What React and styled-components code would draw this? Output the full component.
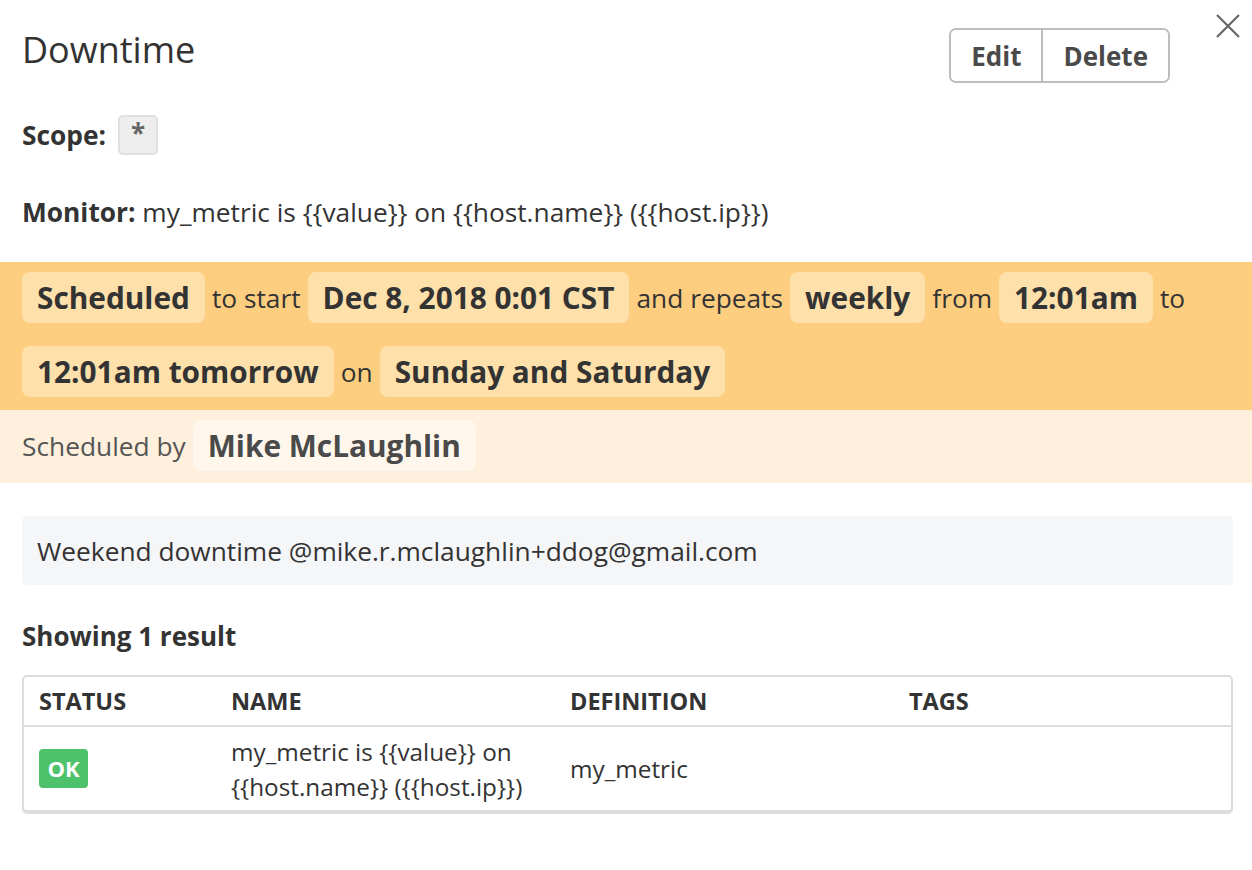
import React from 'react'
import styled, { createGlobalStyle } from 'styled-components'

const GlobalStyle = createGlobalStyle`
  body {
    margin: 0;
    background: #fff;
    font-family: "Open Sans", "Noto Sans", sans-serif;
    color: #333;
  }
`;

const Panel = styled.div`
  position: relative;
  width: 1252px;
  min-height: 870px;
  padding-top: 28px;
`;

const Header = styled.div`
  display: flex;
  align-items: center;
  justify-content: space-between;
  padding: 0 82px 0 22px;
  height: 55px;
`;

const Title = styled.h1`
  margin: 0;
  font-size: 36px;
  font-weight: 400;
  color: #333;
  line-height: 1;
  transform: translateY(-6px);
`;

const ButtonGroup = styled.div`
  display: flex;
  height: 55px;
  border: 2px solid #bdbdbd;
  border-radius: 7px;
  overflow: hidden;
  box-sizing: border-box;
`;

const GroupButton = styled.button`
  font-family: inherit;
  font-size: 26px;
  font-weight: 700;
  color: #4a4a4a;
  background: #fff;
  border: none;
  padding: 0 ${p => p.$pad}px;
  border-left: ${p => (p.$first ? 'none' : '2px solid #bdbdbd')};
  cursor: pointer;
`;

const Close = styled.button`
  position: absolute;
  top: 12px;
  right: 10px;
  width: 28px;
  height: 28px;
  padding: 0;
  border: none;
  background: none;
`;

const Field = styled.div`
  display: flex;
  align-items: center;
  gap: 12px;
  padding: 0 22px;
  font-size: 26.3px;
  margin-top: ${p => p.$top}px;
  height: 40px;
`;

const Label = styled.span`
  font-weight: 700;
  color: #333;
`;

const ScopeChip = styled.span`
  display: inline-flex;
  align-items: flex-start;
  justify-content: center;
  width: 40px;
  height: 40px;
  box-sizing: border-box;
  background: #eeeeee;
  border: 2px solid #e0e0e0;
  border-radius: 5px;
  color: #666;
  font-weight: 700;
  font-size: 26px;
  line-height: 1.3;
`;

const ScheduleBand = styled.div`
  margin-top: 30px;
  background: #fdce80;
  padding: 10px 22px 13px;
  display: flex;
  flex-wrap: wrap;
  align-items: center;
  column-gap: 7px;
  row-gap: 23px;
  font-size: 26.3px;
  color: #333;
`;

const Chip = styled.span`
  display: inline-flex;
  align-items: center;
  height: 51px;
  padding: 0 15px;
  border-radius: 8px;
  background: ${p => p.$bg || '#fde0aa'};
  font-size: 29.8px;
  font-weight: 700;
  color: ${p => p.$color || '#333'};
`;

const Word = styled.span`
  color: ${p => p.$color || '#333'};
`;

const AuthorBand = styled.div`
  background: #fef0dc;
  padding: 10px 22px 12px;
  display: flex;
  align-items: center;
  gap: 7px;
  font-size: 26.3px;
`;

const Body = styled.div`
  padding: 0 19px 0 22px;
`;

const Message = styled.div`
  margin-top: 33px;
  background: #f5f6f8;
  border-radius: 5px;
  height: 69px;
  display: flex;
  align-items: center;
  padding: 0 15px;
  font-size: 26.3px;
  color: #333;
`;

const Results = styled.div`
  margin-top: 33px;
  font-size: 26px;
  font-weight: 700;
  color: #333;
`;

const Table = styled.div`
  margin-top: 21px;
  border: 2px solid #dddde0;
  border-bottom-width: 4px;
  border-radius: 5px;
`;

const Row = styled.div`
  display: grid;
  grid-template-columns: 192px 339px 339px 1fr;
  align-items: center;
  height: ${p => p.$h}px;
  border-top: ${p => (p.$head ? 'none' : '2px solid #dddde0')};
  box-sizing: border-box;
`;

const HeadCell = styled.div`
  padding-left: 15px;
  font-size: 23.5px;
  font-weight: 700;
  color: #333;
  text-transform: uppercase;
`;

const Cell = styled.div`
  padding-left: 15px;
  font-size: 24.3px;
  line-height: 35px;
  color: #333;
`;

const Status = styled.span`
  display: inline-flex;
  align-items: center;
  justify-content: center;
  width: 49px;
  height: 39px;
  border-radius: 4px;
  background: #4dc26b;
  color: #fff;
  font-size: 22px;
  font-weight: 700;
`;

export default function App() {
  return (
    <>
      <GlobalStyle />
      <Panel>
        <Close aria-label="close">
          <svg width="28" height="28" viewBox="0 0 28 28">
            <path d="M3 3 L25 25 M25 3 L3 25" stroke="#666" strokeWidth="2.2" fill="none" />
          </svg>
        </Close>
        <Header>
          <Title>Downtime</Title>
          <ButtonGroup>
            <GroupButton $first $pad={20}>Edit</GroupButton>
            <GroupButton $pad={20}>Delete</GroupButton>
          </ButtonGroup>
        </Header>

        <Field $top={32}>
          <Label>Scope:</Label>
          <ScopeChip>*</ScopeChip>
        </Field>
        <Field $top={37}>
          <span>
            <Label>Monitor:</Label> my_metric is {'{{value}}'} on {'{{host.name}}'} ({'{{host.ip}}'})
          </span>
        </Field>

        <ScheduleBand>
          <Chip>Scheduled</Chip>
          <Word>to start</Word>
          <Chip>Dec 8, 2018 0:01 CST</Chip>
          <Word>and repeats</Word>
          <Chip>weekly</Chip>
          <Word>from</Word>
          <Chip>12:01am</Chip>
          <Word>to</Word>
          <Chip>12:01am tomorrow</Chip>
          <Word>on</Word>
          <Chip>Sunday and Saturday</Chip>
        </ScheduleBand>
        <AuthorBand>
          <Word $color="#555">Scheduled by</Word>
          <Chip $bg="#fff7ec" $color="#4a4a4a">Mike McLaughlin</Chip>
        </AuthorBand>

        <Body>
          <Message>Weekend downtime @mike.r.mclaughlin+ddog@gmail.com</Message>
          <Results>Showing 1 result</Results>
          <Table>
            <Row $head $h={48}>
              <HeadCell>Status</HeadCell>
              <HeadCell>Name</HeadCell>
              <HeadCell>Definition</HeadCell>
              <HeadCell>Tags</HeadCell>
            </Row>
            <Row $h={85}>
              <Cell><Status>OK</Status></Cell>
              <Cell>my_metric is {'{{value}}'} on<br />{'{{host.name}}'} ({'{{host.ip}}'})</Cell>
              <Cell>my_metric</Cell>
              <Cell />
            </Row>
          </Table>
        </Body>
      </Panel>
    </>
  )
}
